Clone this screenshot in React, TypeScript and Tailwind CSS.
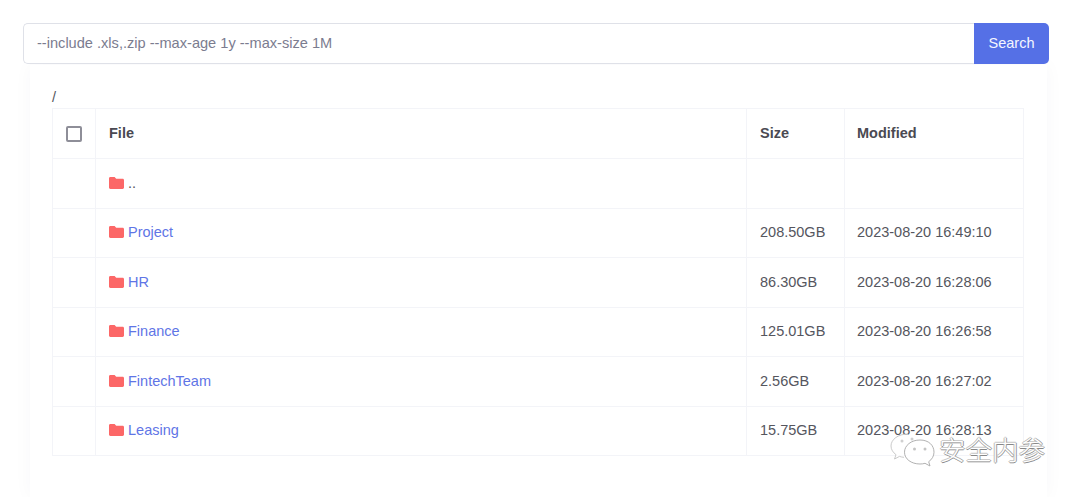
const FONT = 'font-["Liberation_Sans",Arial,sans-serif]';

const ROWS = [
  { name: 'Project', size: '208.50GB', modified: '2023-08-20 16:49:10' },
  { name: 'HR', size: '86.30GB', modified: '2023-08-20 16:28:06' },
  { name: 'Finance', size: '125.01GB', modified: '2023-08-20 16:26:58' },
  { name: 'FintechTeam', size: '2.56GB', modified: '2023-08-20 16:27:02' },
  { name: 'Leasing', size: '15.75GB', modified: '2023-08-20 16:28:13' },
];

function FolderIcon() {
  return (
    <svg width="15" height="12" viewBox="0 0 15 12" className="shrink-0 -translate-y-px">
      <path d="M1.4 0h4.200l1.600 1.700h6.400c.8 0 1.400.6 1.400 1.400v7.500c0 .8-.6 1.400-1.400 1.400H1.400C.6 12 0 11.400 0 10.600V1.400C0 .6.600 0 1.400 0z" fill="#fc6767" />
    </svg>
  );
}

function Row({ name, size, modified, link = true }: { name: string; size?: string; modified?: string; link?: boolean }) {
  return (
    <tr className="h-[49.500px] text-[14.500px] text-[#55565e]">
      <td className="border border-[#f3f4f8]" />
      <td className="border border-[#f3f4f8] pl-[13px] pt-px">
        <div className="flex items-center gap-[4px]">
          <FolderIcon />
          <span className={link ? 'text-[#5f75e6]' : 'text-[#55565e]'}>{name}</span>
        </div>
      </td>
      <td className="border border-[#f3f4f8] pl-[13px] pt-px">{size}</td>
      <td className="border border-[#f3f4f8] pl-[12px] pt-px">{modified}</td>
    </tr>
  );
}

export default function App() {
  return (
    <div className={`relative h-[497px] w-[1080px] overflow-hidden bg-white ${FONT}`}>
      <div className="pl-[23px] pr-[31px] pt-[23px]">
        <div className="flex h-[41px]">
          <div className="flex flex-1 items-center rounded-l-[5px] border border-r-0 border-[#dfe1e8] bg-white pl-[13px] pt-px text-[14.600px] text-[#7b7c8f]">
            --include .xls,.zip --max-age 1y --max-size 1M
          </div>
          <button className="w-[75px] rounded-r-[5px] bg-[#5570e6] pt-px text-[14.500px] text-[#f4f6ff]">Search</button>
        </div>
      </div>

      {/* Card */}
      <div className="ml-[30px] mt-[1px] h-[432px] w-[1017px] bg-white px-[22px] pt-[23px] shadow-[0_0_18px_rgba(40,40,90,0.035)]">
        <div className="h-[20px] text-[14.500px] leading-[18px] text-[#55565e]">/</div>
        <table className="w-[971px] table-fixed border-collapse">
          <colgroup>
            <col className="w-[43px]" />
            <col className="w-[651px]" />
            <col className="w-[98px]" />
            <col className="w-[179px]" />
          </colgroup>
          <thead>
            <tr className="h-[50px] text-left text-[14.500px] font-bold text-[#4a4a52]">
              <th className="border border-[#f3f4f8]">
                <div className="ml-[13px] h-[16px] w-[16px] rounded-[2px] border-2 border-[#8e8e98]" />
              </th>
              <th className="border border-[#f3f4f8] pl-[13px]">File</th>
              <th className="border border-[#f3f4f8] pl-[13px]">Size</th>
              <th className="border border-[#f3f4f8] pl-[12px]">Modified</th>
            </tr>
          </thead>
          <tbody>
            <Row name=".." link={false} />
            {ROWS.map((r) => (
              <Row key={r.name} {...r} />
            ))}
          </tbody>
        </table>
      </div>

      {/* Watermark */}
      <div className="absolute left-[887px] top-[431px] flex items-center gap-[2px]">
        <svg width="50" height="36" viewBox="0 0 50 36" fill="none">
          <path d="M21 3C11 3 4 8.500 4 15c0 3.500 2 6.500 5 8.700L7.500 28l5-2.600c1.500.5 3 .8 4.500.9" stroke="#bdbdbd" strokeWidth="0.800" fill="rgba(255,255,255,0.7)" />
          <path d="M33 9c-8.800 0-15.500 5.400-15.500 12.200S24.200 33 33 33c1.800 0 3.500-.2 5-.7l5 2.700-1.300-4.300c3.200-2.200 5.300-5.700 5.300-9.500C47 14.400 41.800 9 33 9z" stroke="#a8a8a8" strokeWidth="0.900" fill="rgba(255,255,255,0.9)" />
          <circle cx="27.500" cy="18" r="1.500" fill="#c4c4c4" />
          <circle cx="38" cy="18" r="1.500" fill="#c4c4c4" />
          <circle cx="15" cy="10" r="1.500" fill="#d0d0d0" />
          <circle cx="25" cy="8" r="1.500" fill="#d0d0d0" />
        </svg>
        <span className='font-["Noto_Sans_CJK_SC",sans-serif] text-[26.500px] font-light leading-none text-white [text-shadow:1px_0_0_#999,-1px_0_0_#bbb,0_1px_0_#888,0_-1px_0_#ccc]'>
          安全内参
        </span>
      </div>
    </div>
  );
}
